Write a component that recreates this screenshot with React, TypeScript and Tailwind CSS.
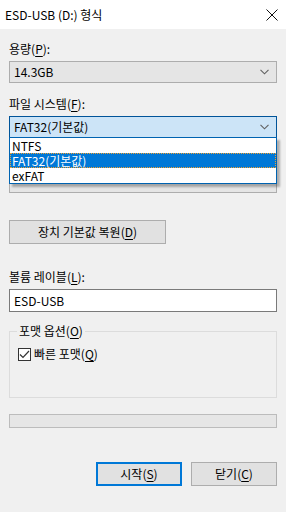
import React from "react";

const font = "font-['Noto_Sans_CJK_KR','Noto_Sans',sans-serif]";

function Mn({ children }: { children: React.ReactNode }) {
  return <span className="underline underline-offset-2">{children}</span>;
}

function Chevron({ color = "#606060" }: { color?: string }) {
  return (
    <svg width="9" height="6" viewBox="0 0 9 6" fill="none">
      <path d="M0.5 0.8 L4.5 4.8 L8.5 0.8" stroke={color} strokeWidth="1.1" />
    </svg>
  );
}

function Combo({ value, active = false }: { value: string; active?: boolean }) {
  return (
    <div
      className={
        "h-[22px] flex items-center justify-between pl-[4px] pr-[7px] border text-[12px] leading-[14px] " +
        (active ? "bg-[#cce4f7] border-[#005499]" : "bg-[#e5e5e5] border-[#adadad]")
      }
    >
      <span>{value}</span>
      <Chevron />
    </div>
  );
}

export default function App() {
  return (
    <div className={`relative w-[286px] h-[512px] bg-[#f0f0f0] text-black flex flex-col ${font}`}>
      {/* title bar */}
      <div className="h-[29px] bg-white flex items-center justify-between pl-[5px] pr-[8px] text-[12px]">
        <span>ESD-USB (D:) 형식</span>
        <svg width="12" height="12" viewBox="0 0 12 12">
          <path d="M0.5 0.5 L11.5 11.5 M11.5 0.5 L0.5 11.5" stroke="#111" strokeWidth="1" />
        </svg>
      </div>

      <div className="flex flex-col px-[9px] text-[12px] leading-[14px]">
        <div className="mt-[13px] h-[14px]">
          용량(<Mn>P</Mn>):
        </div>
        <div className="mt-[5px]">
          <Combo value="14.3GB" />
        </div>

        <div className="mt-[14px] h-[14px]">
          파일 시스템(<Mn>F</Mn>):
        </div>
        <div className="mt-[5px]">
          <Combo value="FAT32(기본값)" active />
        </div>

        {/* allocation unit row, covered by the open list */}
        <div className="mt-[14px] h-[14px]" />
        <div className="mt-[5px] h-[22px] bg-[#e5e5e5] border border-[#adadad]" />

        <button className="mt-[27px] w-[157px] h-[24px] bg-[#e1e1e1] border border-[#adadad] text-[12px]">
          장치 기본값 복원(<Mn>D</Mn>)
        </button>

        <div className="mt-[26px] h-[14px]">
          볼륨 레이블(<Mn>L</Mn>):
        </div>
        <div className="mt-[5px] h-[23px] bg-white border border-[#7a7a7a] flex items-center pl-[4px]">
          ESD-USB
        </div>

        <fieldset className="mt-[12px] h-[74px] border border-[#dcdcdc] px-[8px] pt-0">
          <legend className="px-[2px] ml-[-1px] text-[12px] leading-[14px]">
            포맷 옵션(<Mn>O</Mn>)
          </legend>
          <div className="mt-[9px] flex items-center gap-[3px]">
            <div className="w-[13px] h-[13px] border border-[#333] bg-white flex items-center justify-center">
              <svg width="11" height="9" viewBox="0 0 11 9" fill="none">
                <path d="M1 4.5 L4 7.5 L10 1" stroke="#333" strokeWidth="1.2" />
              </svg>
            </div>
            <span>
              빠른 포맷(<Mn>Q</Mn>)
            </span>
          </div>
        </fieldset>

        <div className="mt-[16px] h-[14px] bg-[#e6e6e6] border border-[#bcbcbc]" />

        <div className="mt-[34px] flex justify-end gap-[9px]">
          <button className="w-[86px] h-[24px] bg-[#e1e1e1] border-2 border-[#0078d7] text-[12px]">
            시작(<Mn>S</Mn>)
          </button>
          <button className="w-[86px] h-[24px] bg-[#e1e1e1] border border-[#adadad] text-[12px]">
            닫기(<Mn>C</Mn>)
          </button>
        </div>
      </div>

      {/* open dropdown list */}
      <div className="absolute left-[9px] top-[137px] w-[268px] h-[47px] bg-white border border-[#0063b1] shadow-[3px_3px_2px_rgba(0,0,0,0.28)] flex flex-col text-[12px] leading-[15px]">
        <div className="h-[15px] pl-[2px]">NTFS</div>
        <div className="h-[15px] pl-[2px] bg-[#0078d7] text-white outline outline-1 outline-dotted outline-[#f0a030] -outline-offset-1">
          FAT32(기본값)
        </div>
        <div className="h-[15px] pl-[2px]">exFAT</div>
      </div>
    </div>
  );
}
